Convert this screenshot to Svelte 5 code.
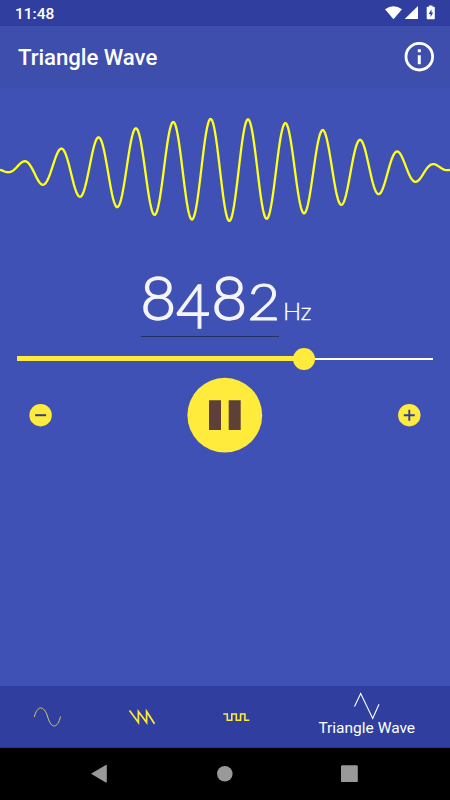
<script>
  let frequency = 8482;
  let min = 0, max = 12288;
  const waves = ['Sine Wave', 'Sawtooth Wave', 'Square Wave', 'Triangle Wave'];
  let selected = 3;

  $: digits = String(frequency).split('');
  $: percent = (frequency - min) / (max - min) * 100;

  const wavePath = buildWave(450, 37.44, 51.2);

  // sine carrier that fades out towards both edges
  function buildWave(width, period, amplitude) {
    let d = '';
    for (let x = 0; x <= width; x++) {
      const envelope = amplitude * Math.sin(Math.PI * x / width);
      const y = 51.8 - envelope * Math.cos(2 * Math.PI * (x - 210.6) / period);
      d += (x ? 'L' : 'M') + x + ' ' + y.toFixed(2);
    }
    return d;
  }
</script>

<div class="screen">
  <div class="status">
    <span class="time">11:48</span>
    <svg width="52" height="16" viewBox="0 0 52 16" fill="#fff">
      <path d="M0 4.2Q8.5-1.8 17 4.2L8.5 14.3Z"/>
      <path d="M33 1v13H19.7Z"/>
      <path d="M44 .5h3.5v1.2H49q.8 0 .8.8v10.9q0 .8-.8.8h-6.5q-.8 0-.8-.8V2.5q0-.8.8-.8H44Z"/>
      <path d="M46.500 4.200 43.700 9h1.800v3.200l2.700-4.800h-1.700Z" fill="#303f9f"/>
    </svg>
  </div>

  <header>
    <h1>{waves[selected]}</h1>
    <button class="info" aria-label="Info">
      <svg width="30" height="30" viewBox="0 0 30 30" fill="#fff">
        <circle cx="15.300" cy="14.700" r="13.300" fill="none" stroke="#fff" stroke-width="2.800"/>
        <path d="M13.800 7.300h3v3h-3zM13.800 13.300h3v8.900h-3z"/>
      </svg>
    </button>
  </header>

  <main>
    <svg class="wave" width="450" height="104" viewBox="0 0 450 104">
      <path d={wavePath} fill="none" stroke="#ffff1c" stroke-width="2.3"/>
    </svg>

    <div class="frequency">
      <div class="value">
        {#each digits as digit}
          <span class="digit d{digit}"><span>{digit}</span></span>
        {/each}
      </div>
      <span class="unit">Hz</span>
    </div>

    <div class="slider">
      <div class="fill" style="width:{percent}%"></div>
      <div class="thumb"></div>
      <div class="rest"></div>
    </div>

    <div class="controls">
      <button aria-label="Decrease">
        <svg width="24" height="24" viewBox="0 0 24 24">
          <circle cx="12.600" cy="12.200" r="11.200" fill="#ffeb3b"/>
          <path d="M7.100 12.200h11" stroke="#303f9f" stroke-width="2"/>
        </svg>
      </button>
      <button aria-label="Pause">
        <svg width="76" height="76" viewBox="0 0 76 76">
          <circle cx="37.800" cy="38.200" r="37.400" fill="#ffeb3b"/>
          <path d="M22 23.300h12v29.600H22zM41.700 23.300h12v29.600h-12z" fill="#5d4037"/>
        </svg>
      </button>
      <button aria-label="Increase">
        <svg width="24" height="24" viewBox="0 0 24 24">
          <circle cx="12.300" cy="12.200" r="11.200" fill="#ffeb3b"/>
          <path d="M6.800 12.200h11M12.300 6.700v11" stroke="#303f9f" stroke-width="1.900"/>
        </svg>
      </button>
    </div>
  </main>

  <nav class="tabs">
    <button aria-label={waves[0]}>
      <svg width="30" height="24" viewBox="0 0 30 24">
        <path d="M2.300 12C5 .5 12-.6 15.700 12S25.800 23.500 28.500 11.500" fill="none" stroke="#d5c96c" stroke-width="1"/>
      </svg>
    </button>
    <button aria-label={waves[1]}>
      <svg width="30" height="24" viewBox="0 0 30 24">
        <path d="M2.500 5.500 11.400 17.500V6.500L19.600 17.500V6.500L27.500 18.800" fill="none" stroke="#ffeb3b" stroke-width="1.700"/>
      </svg>
    </button>
    <button aria-label={waves[2]}>
      <svg width="30" height="24" viewBox="0 0 30 24">
        <path d="M2.300 9h4v6.300h4.500V9h4.500v6.300h4.300V9h4.300v6.300H28.300" fill="none" stroke="#ffeb3b" stroke-width="1.600"/>
      </svg>
    </button>
    <button class="active">
      <svg width="30" height="28" viewBox="0 0 30 28">
        <path d="M2.500 14.500 8.700 1.500 20.700 26.500 27 12.200" fill="none" stroke="#fff" stroke-width="1.100"/>
      </svg>
      <span>{waves[3]}</span>
    </button>
  </nav>

  <div class="system">
    <svg width="18" height="20" viewBox="0 0 18 20"><path d="M0 9.700 14.800.900q1-.5 1 .5v16.500q0 1-1 .5Z"/></svg>
    <svg width="18" height="20" viewBox="0 0 18 20"><circle cx="8.800" cy="9.700" r="7.800"/></svg>
    <svg width="18" height="20" viewBox="0 0 18 20"><rect x="0" y="1.300" width="16.800" height="16.800" rx="1.200"/></svg>
  </div>
</div>

<style>
  :global(body) {
    margin: 0;
  }
  .screen {
    width: 450px;
    height: 800px;
    display: flex;
    flex-direction: column;
    overflow: hidden;
    background: #3f51b5;
    color: #fff;
    font-family: Roboto, sans-serif;
  }
  svg {
    display: block;
    flex: none;
  }
  button {
    border: 0;
    padding: 0;
    background: none;
    color: inherit;
    font: inherit;
  }
  .status {
    height: 26px;
    box-sizing: border-box;
    padding: 0 13px 0 15px;
    display: flex;
    align-items: center;
    justify-content: space-between;
    background: #303f9f;
  }
  .time {
    font-size: 15.500px;
    font-weight: 500;
    line-height: 24px;
    padding-top: 2px;
  }
  header {
    height: 62px;
    box-sizing: border-box;
    padding: 0 16px 0 18px;
    display: flex;
    align-items: center;
    justify-content: space-between;
    background: #3e4eac;
  }
  h1 {
    margin: 0;
    font-size: 22.200px;
    font-weight: 500;
    line-height: 28px;
    letter-spacing: -.05px;
  }
  main {
    flex: 1;
    padding-top: 30px;
  }
  .frequency {
    height: 86px;
    margin: 30px 0 0 141px;
    display: flex;
    font-family: Lato, sans-serif;
    font-weight: 300;
  }
  .value {
    width: 138px;
    height: 84px;
    display: flex;
    border-bottom: 1px solid #26305f;
  }
  .digit {
    flex: 1;
    line-height: 89px;
    font-size: 61px;
    text-align: center;
    color: #f5f5f8;
    -webkit-text-stroke: 1.300px #f5f5f8;
  }
  .digit span {
    display: inline-block;
  }
  /* old-style figures: 4 drops below the baseline, 2 sits at x-height */
  .d4 span {
    transform: translate(-.5px, 7.500px) scaleX(.97);
  }
  .d2 span {
    transform: translate(-.8px, 4px) scale(.92, .83);
  }
  .d8 span {
    transform: translate(-.3px, 0) scaleX(1.020);
  }
  .unit {
    font-size: 24px;
    line-height: 104px;
    margin: 7px 0 0 4px;
    -webkit-text-stroke: .3px #fff;
  }
  .slider {
    height: 23px;
    margin: 9px 17px 0;
    display: flex;
    align-items: center;
  }
  .fill {
    height: 5px;
    background: #ffeb3b;
  }
  .thumb {
    width: 22px;
    height: 22px;
    margin: 0 -11px;
    border-radius: 50%;
    background: #ffeb3b;
    z-index: 1;
  }
  .rest {
    flex: 1;
    height: 2px;
    background: #fff;
  }
  .controls {
    margin: 7px 29px 0 28px;
    display: flex;
    align-items: center;
    justify-content: space-between;
  }
  .tabs {
    height: 62px;
    box-sizing: border-box;
    display: flex;
    background: #303f9f;
    border-bottom: 1px solid #28348a;
  }
  .tabs button {
    width: 94.500px;
    display: flex;
    flex-direction: column;
    align-items: center;
    justify-content: center;
  }
  .tabs .active {
    flex: 1;
    justify-content: flex-start;
    padding-top: 6px;
  }
  .active span {
    font-size: 15.500px;
    line-height: 18px;
    margin-top: -1px;
  }
  .system {
    height: 52px;
    display: flex;
    align-items: center;
    justify-content: center;
    gap: 107px;
    background: #000;
    fill: #999;
  }
</style>
